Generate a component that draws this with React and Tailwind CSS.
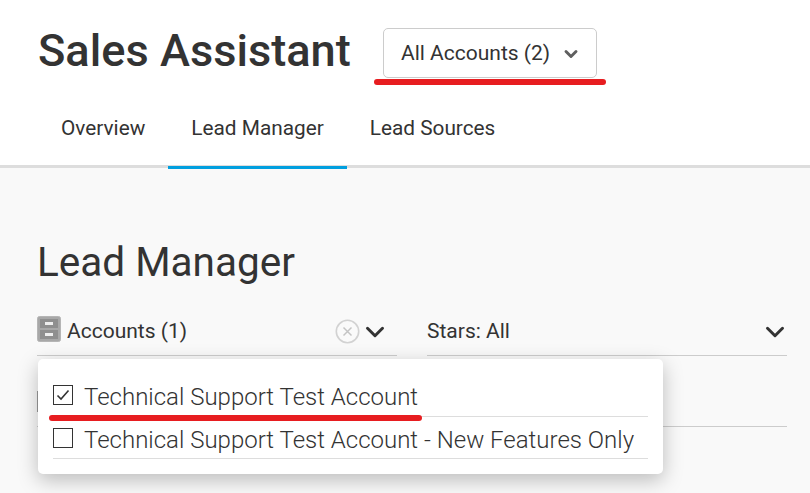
import { ChevronDown } from 'lucide-react'

const tabs = [
  { label: 'Overview' },
  { label: 'Lead Manager', active: true },
  { label: 'Lead Sources' },
]

function CabinetIcon() {
  return (
    <svg width="24" height="26" viewBox="0 0 24 26" className="-mt-[6px] shrink-0">
      <rect x="0.5" y="0.5" width="23" height="25" rx="2" fill="#a8a8a8" stroke="#b5b5b5" />
      <rect x="3" y="3" width="18" height="9" fill="#8f8f8f" />
      <rect x="3" y="14" width="18" height="9" fill="#8f8f8f" />
      <rect x="8" y="6" width="8" height="3" fill="#eeeeee" />
      <rect x="8" y="17" width="8" height="3" fill="#eeeeee" />
    </svg>
  )
}

function ClearIcon() {
  return (
    <svg width="25" height="25" viewBox="0 0 25 25" className="shrink-0">
      <circle cx="12.5" cy="12.5" r="11.2" fill="#fafafa" stroke="#d2d2d2" strokeWidth="1.6" />
      <path d="M8.5 8.5l8 8M16.5 8.5l-8 8" stroke="#c4c4c4" strokeWidth="1.5" />
    </svg>
  )
}

function CheckRow({ label, checked, short }) {
  return (
    <div className={`flex items-center border-b border-[#dddddd] ${short ? 'h-[42px]' : 'h-[43px]'}`}>
      <span className="flex h-5 w-5 shrink-0 items-center justify-center border border-[#333333] bg-white">
        {checked && (
          <svg width="14" height="12" viewBox="0 0 14 12">
            <path d="M1.5 6.5l3.5 3.5 7.5-8.5" fill="none" stroke="#333333" strokeWidth="1.6" />
          </svg>
        )}
      </span>
      <span className="ml-[11px] whitespace-nowrap pt-[4px] text-[24px] font-light leading-none text-[#333333]">
        {label}
      </span>
    </div>
  )
}

export default function App() {
  return (
    <div className="h-[493px] w-[810px] overflow-hidden bg-[#f9f9f9] font-['Roboto',sans-serif] text-[#333333]">
      <header className="h-[168px] border-b-[3px] border-[#dddddd] bg-white">
        <div className="flex items-start pl-[38px] pt-[28px]">
          <h1 className="w-[311px] whitespace-nowrap pt-px text-[45.2px] font-medium leading-[44px]">Sales Assistant</h1>
          <div className="relative ml-[34px]">
            <button
              type="button"
              className="flex h-[50px] w-[214px] items-center rounded-[5px] border border-[#cccccc] bg-white pl-[17px] pt-[2px] text-[21px]"
            >
              All Accounts (2)
              <ChevronDown size={20} strokeWidth={3.5} className="ml-[11px] text-[#5f5f5f]" />
            </button>
            <div className="absolute left-[-9px] top-[51px] h-[6px] w-[232px] rounded-full bg-[#e71d20]" />
          </div>
        </div>
        <nav className="mt-[22px] flex pl-[38px]">
          {tabs.map((tab) => (
            <a
              key={tab.label}
              className={`relative z-10 flex h-[69px] items-center border-b-[3px] px-[23px] pb-[8px] text-[20.8px] ${
                tab.active ? 'border-[#009fdf]' : 'border-transparent'
              }`}
            >
              {tab.label}
            </a>
          ))}
        </nav>
      </header>

      <main className="pl-[37px] pt-[69px]">
        <h2 className="text-[40.5px] font-normal leading-[50px]">Lead Manager</h2>
        <div className="mt-[23px] flex gap-[30px]">
          <div className="relative w-[360px] shrink-0">
            <div className="flex h-[46px] items-center border-b border-[#cccccc] pb-[2px]">
              <CabinetIcon />
              <span className="ml-[6px] text-[21px]">Accounts (1)</span>
              <span className="ml-auto flex items-center pr-[7px]">
                <ClearIcon />
                <ChevronDown size={30} strokeWidth={2.4} className="text-[#333333]" />
              </span>
            </div>
            <div className="absolute left-px top-[49px] z-10 w-[625px] rounded-[5px] bg-white p-[15px] shadow-[0_6px_20px_rgba(0,0,0,0.25)]">
              <CheckRow label="Technical Support Test Account" checked />
              <CheckRow label="Technical Support Test Account - New Features Only" short />
              <div className="absolute left-[11px] top-[56px] h-[6px] w-[373px] rounded-full bg-[#e71d20]" />
            </div>
          </div>
          <div className="flex h-[46px] w-[360px] shrink-0 items-center justify-between border-b border-[#cccccc] pb-[2px] text-[21px]">
            Stars: All
            <ChevronDown size={30} strokeWidth={2.4} className="-mr-[3px] text-[#333333]" />
          </div>
        </div>
        <div className="flex gap-[30px]">
          <div className="h-[71px] w-[360px] shrink-0 border-b border-[#cccccc] pt-[35px]">
            <div className="h-[21px] w-px bg-[#999999]" />
          </div>
          <div className="h-[71px] w-[360px] shrink-0 border-b border-[#cccccc]" />
        </div>
      </main>
    </div>
  )
}
